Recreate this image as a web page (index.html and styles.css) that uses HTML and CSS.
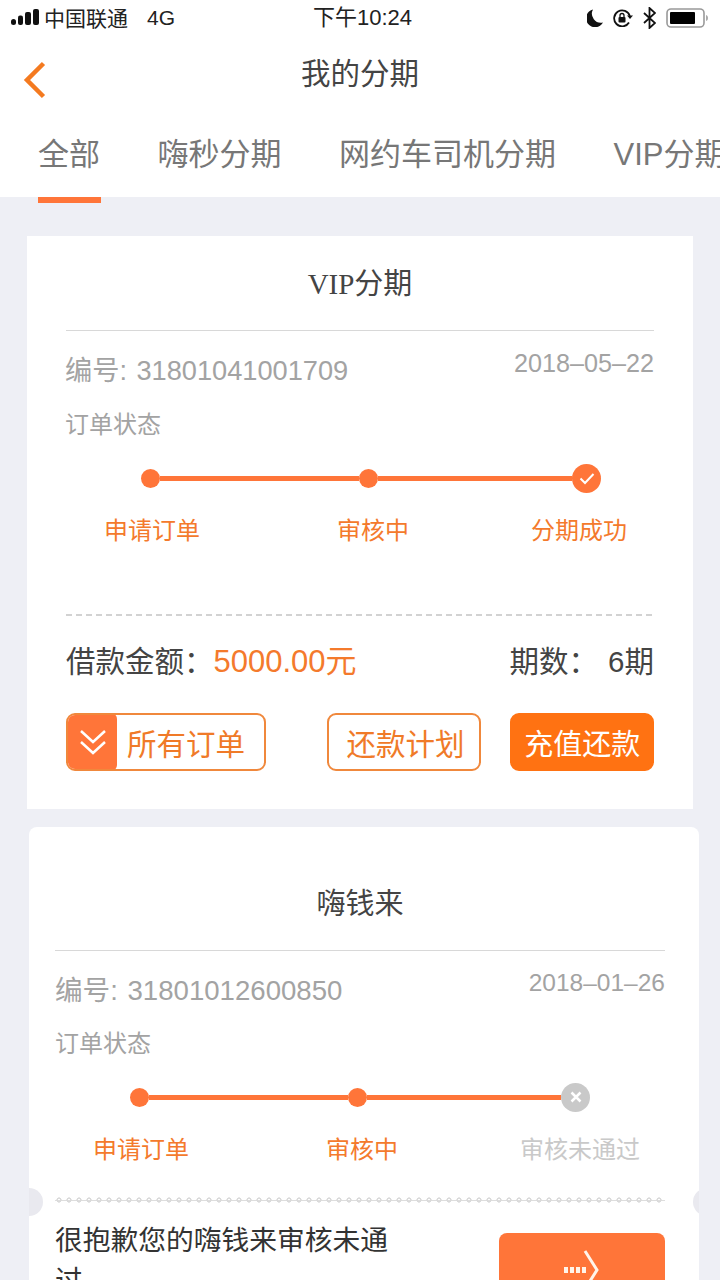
FILE: index.html
```html
<!DOCTYPE html>
<html lang="zh-CN">
<head>
    <meta charset="UTF-8">
    <meta name="viewport" content="width=device-width, initial-scale=1.0">
    <title>我的分期</title>
    <link rel="stylesheet" href="styles.css">
</head>
<body>
    <div class="header">
        <div class="status-bar">
            <div class="status-left">
                <svg class="signal" width="28" height="16" viewBox="0 0 28 16">
                    <rect x="0" y="10" width="5" height="6" rx="2.500" fill="#111"/>
                    <rect x="7" y="6.500" width="5" height="9.500" rx="2" fill="#111"/>
                    <rect x="14" y="3" width="6" height="13" rx="2" fill="#111"/>
                    <rect x="22" y="0" width="6" height="16" rx="2" fill="#111"/>
                </svg>
                <span class="carrier">中国联通</span>
                <span class="network">4G</span>
            </div>
            <div class="status-time">下午10:24</div>
            <div class="status-right">
                <svg width="16" height="18" viewBox="0 0 16 18"><path d="M6 0.500A9 9 0 1 0 16 13.500 9 9 0 0 1 6 0.500Z" fill="#111"/></svg>
                <svg width="20" height="18" viewBox="0 0 20 18">
                    <path d="M16 13.500A8 8 0 1 1 16.800 7" fill="none" stroke="#111" stroke-width="1.800"/>
                    <path d="M14 6.500h6l-3 3.500Z" fill="#111"/>
                    <rect x="5.500" y="8" width="7" height="5.500" rx="1" fill="#111"/>
                    <path d="M7 8V6.500a2 2 0 0 1 4 0V8" fill="none" stroke="#111" stroke-width="1.300"/>
                </svg>
                <svg width="13" height="22" viewBox="0 0 13 22"><path d="M1 6l11 10-5.500 5V1l5.500 5L1 16" fill="none" stroke="#111" stroke-width="1.800"/></svg>
                <svg width="42" height="20" viewBox="0 0 42 20">
                    <rect x="1" y="1" width="37" height="18" rx="4" fill="none" stroke="#999" stroke-width="1.600"/>
                    <rect x="4" y="4" width="25" height="12" rx="1" fill="#000"/>
                    <path d="M40 7c1.500.5 2 1.500 2 3s-.5 2.500-2 3Z" fill="#aaa"/>
                </svg>
            </div>
        </div>
        <div class="nav">
            <svg class="back-icon" width="26" height="38" viewBox="0 0 26 38"><path d="M21.500 2.500L5 19l16.500 16.500" fill="none" stroke="#f47a20" stroke-width="4.500"/></svg>
            <span class="nav-title">我的分期</span>
        </div>
        <div class="tabs">
            <div class="tab active">全部</div>
            <div class="tab">嗨秒分期</div>
            <div class="tab">网约车司机分期</div>
            <div class="tab">VIP分期</div>
        </div>
    </div>

    <div class="card card-vip">
        <div class="card-title title-serif">VIP分期</div>
        <div class="order-head">
            <div class="order-no">编号: 31801041001709</div>
            <div class="order-date">2018–05–22</div>
        </div>
        <div class="status-label">订单状态</div>
        <div class="track">
            <span class="dot"></span>
            <span class="track-line line-first"></span>
            <span class="dot"></span>
            <span class="track-line"></span>
            <span class="dot-big">
                <svg width="16" height="13" viewBox="0 0 16 13"><path d="M1.500 6.500l4.500 4.500 8.500-9" fill="none" stroke="#fff" stroke-width="2"/></svg>
            </span>
        </div>
        <div class="steps">
            <span class="step">申请订单</span>
            <span class="step">审核中</span>
            <span class="step">分期成功</span>
        </div>
        <div class="dash-line"></div>
        <div class="amount-row">
            <div>借款金额：<span class="amount">5000.00元</span></div>
            <div class="periods">期数：<span class="period-num">6期</span></div>
        </div>
        <div class="actions">
            <div class="btn btn-all">
                <span class="btn-all-icon">
                    <svg width="28" height="28" viewBox="0 0 28 28"><path d="M2 3l12 11L26 3M2 14l12 11 12-11" fill="none" stroke="#fff" stroke-width="2.500"/></svg>
                </span>
                <span class="btn-all-text">所有订单</span>
            </div>
            <div class="btn btn-plan">还款计划</div>
            <div class="btn btn-pay">充值还款</div>
        </div>
    </div>

    <div class="card card-money">
        <div class="card-title">嗨钱来</div>
        <div class="order-head">
            <div class="order-no">编号: 31801012600850</div>
            <div class="order-date">2018–01–26</div>
        </div>
        <div class="status-label">订单状态</div>
        <div class="track">
            <span class="dot"></span>
            <span class="track-line line-first"></span>
            <span class="dot"></span>
            <span class="track-line"></span>
            <span class="dot-big dot-fail">
                <svg width="12" height="12" viewBox="0 0 12 12"><path d="M1.500 1.500l9 9M10.500 1.500l-9 9" fill="none" stroke="#fff" stroke-width="2.500"/></svg>
            </span>
        </div>
        <div class="steps">
            <span class="step">申请订单</span>
            <span class="step">审核中</span>
            <span class="step step-off">审核未通过</span>
        </div>
        <div class="perforation"></div>
        <span class="notch notch-left"></span>
        <span class="notch notch-right"></span>
        <div class="fail-row">
            <div class="fail-text">很抱歉您的嗨钱来审核未通过</div>
            <div class="fail-btn">
                <svg width="36" height="42" viewBox="0 0 36 42">
                    <path d="M21 2l12 19-12 19" fill="none" stroke="#fff4ea" stroke-width="3"/>
                    <path d="M0 21h23" fill="none" stroke="#fff4ea" stroke-width="6" stroke-dasharray="4 2"/>
                </svg>
            </div>
        </div>
    </div>
</body>
</html>
```

FILE: styles.css
```css
* {
    box-sizing: border-box;
}

html, body {
    height: 1280px;
}

body {
    margin: 0;
    padding: 0;
    overflow: hidden;
    background-color: #eeeff5;
    font-family: "Liberation Sans", "Noto Sans CJK SC", sans-serif;
    color: #333;
}

.header {
    height: 197px;
    background-color: white;
    position: relative;
}

.status-bar {
    height: 36px;
    display: flex;
    align-items: center;
    justify-content: space-between;
    padding: 0 12px 0 10px;
    color: #222;
    position: relative;
}

.status-left {
    display: flex;
    align-items: center;
    font-size: 21px;
}

.signal {
    margin: -2px 5px 0 1px;
}

.carrier {
    margin-top: -2px;
}

.network {
    margin-left: 19px;
}

.status-time {
    position: absolute;
    left: 313px;
    top: 3px;
    font-size: 22px;
    line-height: 30px;
}

.status-right {
    display: flex;
    align-items: center;
    gap: 10px;
}

.nav {
    height: 76px;
    display: flex;
    align-items: center;
    justify-content: center;
    position: relative;
}

.back-icon {
    position: absolute;
    left: 22px;
    top: 25px;
}

.nav-title {
    font-size: 29.500px;
    color: #444;
    margin-top: -6px;
}

.tabs {
    display: flex;
    white-space: nowrap;
    padding-left: 38px;
    gap: 57.500px;
    font-size: 31px;
    color: #777;
}

.tab {
    height: 85px;
    line-height: 86px;
    position: relative;
}

.tab.active::after {
    content: "";
    position: absolute;
    left: 0;
    right: -1px;
    bottom: -6px;
    height: 6px;
    background-color: #ff7539;
}

.card {
    background-color: white;
}

.card-vip {
    width: 666px;
    height: 573px;
    margin: 39px 0 0 27px;
    padding: 0 39px;
}

.card-money {
    width: 670px;
    height: 460px;
    margin: 18px 0 0 29px;
    padding: 0 34px 0 26px;
    border-radius: 8px 8px 0 0;
    position: relative;
    overflow: hidden;
}

.card-title {
    height: 95px;
    line-height: 97px;
    text-align: center;
    font-size: 29px;
    color: #444;
    border-bottom: 1px solid #d8d8d8;
}

.title-serif {
    font-family: "Liberation Serif", "Noto Sans CJK SC", serif;
}

.card-money .card-title {
    height: 124px;
    line-height: 154px;
}

.order-head {
    display: flex;
    justify-content: space-between;
    color: #a3a3a3;
}

.order-no {
    font-size: 27.200px;
    line-height: 40px;
    margin-top: 20px;
    word-spacing: 2px;
}

.card-money .order-no {
    font-size: 27.600px;
}

.card-vip .order-no,
.card-vip .status-label {
    margin-left: -1px;
}

.order-date {
    font-size: 25.200px;
    line-height: 36px;
    margin-top: 14px;
}

.card-money .order-date {
    font-size: 24.500px;
}

.status-label {
    font-size: 24px;
    line-height: 36px;
    margin-top: 16px;
    color: #a3a3a3;
}

.card-money .status-label {
    margin-top: 15px;
}

.track {
    display: flex;
    align-items: center;
    height: 30px;
    margin-top: 20px;
    margin-left: 75px;
    width: 460px;
}

.dot {
    flex: none;
    width: 19px;
    height: 19px;
    border-radius: 50%;
    background-color: #ff7539;
}

.track-line {
    flex: 1;
    height: 5px;
    background-color: #ff7539;
}

.line-first {
    flex: none;
    width: 199px;
}

.dot-big {
    flex: none;
    width: 29px;
    height: 29px;
    border-radius: 50%;
    background-color: #ff7539;
    display: flex;
    align-items: center;
    justify-content: center;
}

.dot-fail {
    background-color: #c9c9c9;
}

.steps {
    display: flex;
    font-size: 24px;
    line-height: 36px;
    margin-top: 20px;
    margin-left: 38px;
    color: #f47a2c;
}

.step + .step {
    margin-left: 137px;
}

.step + .step + .step {
    margin-left: 122px;
}

.step-off {
    color: #c9c9c9;
}

.dash-line {
    margin-top: 65px;
    height: 2px;
    background-image: repeating-linear-gradient(to right, #d2d2d2 0, #d2d2d2 6px, transparent 6px, transparent 10px);
}

.amount-row {
    display: flex;
    justify-content: space-between;
    align-items: baseline;
    margin-top: 24px;
    font-size: 29.500px;
    line-height: 44px;
    color: #444;
}

.amount {
    font-size: 31px;
    color: #f47a2c;
}

.period-num {
    margin-left: 10px;
}

.actions {
    display: flex;
    margin-top: 29px;
}

.btn {
    height: 58px;
    border-radius: 9px;
    border: 2px solid #f0883c;
    color: #f07a28;
    font-size: 29.500px;
    display: flex;
    align-items: center;
    justify-content: center;
}

.btn-all {
    width: 200px;
    justify-content: flex-start;
    overflow: hidden;
}

.btn-all-icon {
    width: 49px;
    height: 58px;
    flex: none;
    background-color: #ff7539;
    border-radius: 0 6px 6px 0;
    display: flex;
    align-items: center;
    justify-content: center;
}

.btn-all-text {
    margin-left: 10px;
}

.btn-plan {
    width: 155px;
    margin-left: 61px;
    padding-left: 3px;
}

.btn-pay {
    width: 144px;
    margin-left: 29px;
    background-color: #ff7212;
    border-color: #ff7212;
    color: white;
    font-size: 29px;
}

.perforation {
    margin-top: 29px;
    height: 6px;
    background-image:
        radial-gradient(circle at 4px 3px, transparent 1.200px, #dadada 1.400px, #dadada 2.400px, transparent 2.800px),
        linear-gradient(to right, #dedede, #dedede);
    background-size: 10px 6px, 100% 1px;
    background-position: 0 0, 0 3px;
    background-repeat: repeat-x, no-repeat;
}

.notch {
    position: absolute;
    top: 361px;
    width: 28px;
    height: 28px;
    border-radius: 50%;
    background-color: #e9e9ef;
}

.notch-left {
    left: -14px;
}

.notch-right {
    right: -22px;
}

.fail-row {
    display: flex;
    justify-content: space-between;
    margin-top: 18px;
}

.fail-text {
    width: 340px;
    font-size: 27.750px;
    line-height: 40px;
    color: #333;
}

.fail-btn {
    width: 166px;
    height: 74px;
    margin-top: 12px;
    border-radius: 8px;
    background-color: #ff7539;
    display: flex;
    align-items: center;
    justify-content: center;
}
```
